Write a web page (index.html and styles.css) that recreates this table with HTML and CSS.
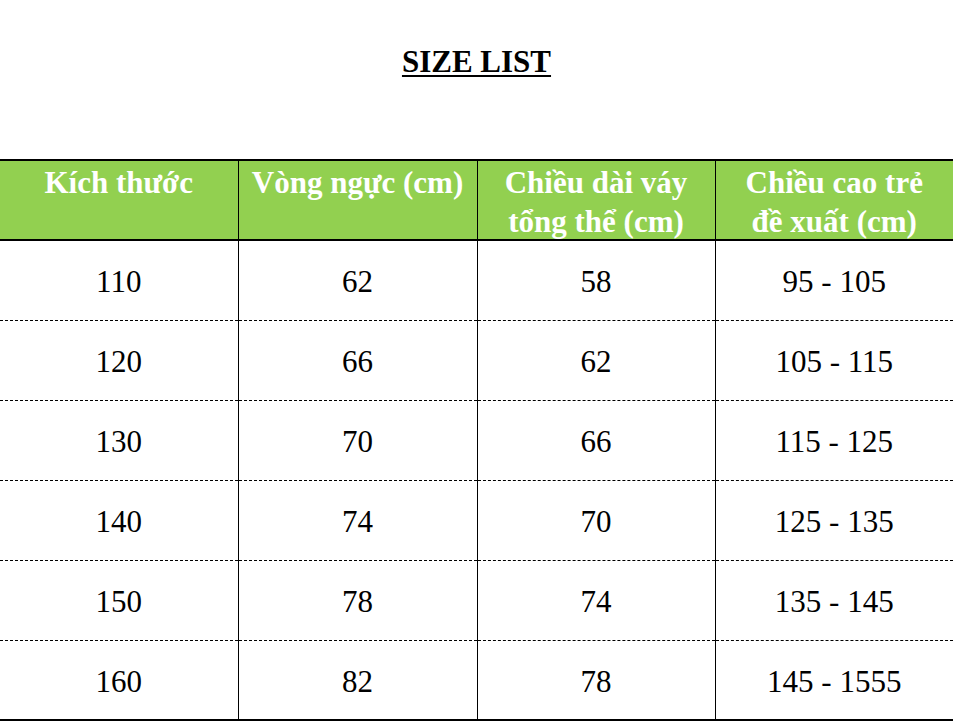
FILE: index.html
```html
<!DOCTYPE html>
<html>
<head>
<meta charset="utf-8">
<link rel="stylesheet" href="styles.css">
</head>
<body>
<h1 class="title">SIZE LIST</h1>
<table class="sizes">
  <colgroup>
    <col class="c1"><col class="c2"><col class="c3"><col class="c4">
  </colgroup>
  <thead>
    <tr>
      <th><div class="hd">Kích thước</div></th>
      <th><div class="hd">Vòng ngực (cm)</div></th>
      <th><div class="hd">Chiều dài váy tổng thể (cm)</div></th>
      <th><div class="hd">Chiều cao trẻ đề xuất (cm)</div></th>
    </tr>
  </thead>
  <tbody>
    <tr><td>110</td><td>62</td><td>58</td><td>95 - 105</td></tr>
    <tr><td>120</td><td>66</td><td>62</td><td>105 - 115</td></tr>
    <tr><td>130</td><td>70</td><td>66</td><td>115 - 125</td></tr>
    <tr><td>140</td><td>74</td><td>70</td><td>125 - 135</td></tr>
    <tr><td>150</td><td>78</td><td>74</td><td>135 - 145</td></tr>
    <tr class="last"><td>160</td><td>82</td><td>78</td><td>145 - 1555</td></tr>
  </tbody>
</table>
</body>
</html>
```

FILE: styles.css
```css
html, body {
  margin: 0;
  padding: 0;
  background: #ffffff;
}
body {
  width: 953px;
  height: 721px;
  overflow: hidden;
  font-family: "Liberation Serif", "Times New Roman", serif;
  color: #000;
}
.title {
  margin: 0;
  padding-top: 44px;
  height: 159px;
  box-sizing: border-box;
  text-align: center;
  font-size: 31px;
  font-weight: bold;
  line-height: 36px;
  text-decoration: underline;
  text-decoration-thickness: 2px;
  text-underline-offset: 3px;
}
.sizes {
  width: 953px;
  border-collapse: collapse;
  table-layout: fixed;
}
.c1 { width: 238px; }
.c2 { width: 239px; }
.c3 { width: 238px; }
.c4 { width: 238px; }
.sizes th {
  background: #92d050;
  color: #ffffff;
  font-weight: bold;
  font-size: 31px;
  line-height: 39px;
  vertical-align: top;
  padding: 0 12px;
  text-align: center;
  border-top: 2px solid #000;
  border-bottom: 2px solid #000;
  border-left: 1px solid #000;
}
.hd {
  height: 78px;
  box-sizing: border-box;
  padding-top: 2px;
}
.sizes td {
  height: 80px;
  box-sizing: border-box;
  font-size: 31px;
  text-align: center;
  vertical-align: middle;
  padding: 4px 0 0;
  border-left: 1px solid #000;
  border-bottom: 1px dashed #000;
}
.sizes th:first-child,
.sizes td:first-child {
  border-left: none;
}
.sizes tr.last td {
  border-bottom: 2px solid #000;
}
```
